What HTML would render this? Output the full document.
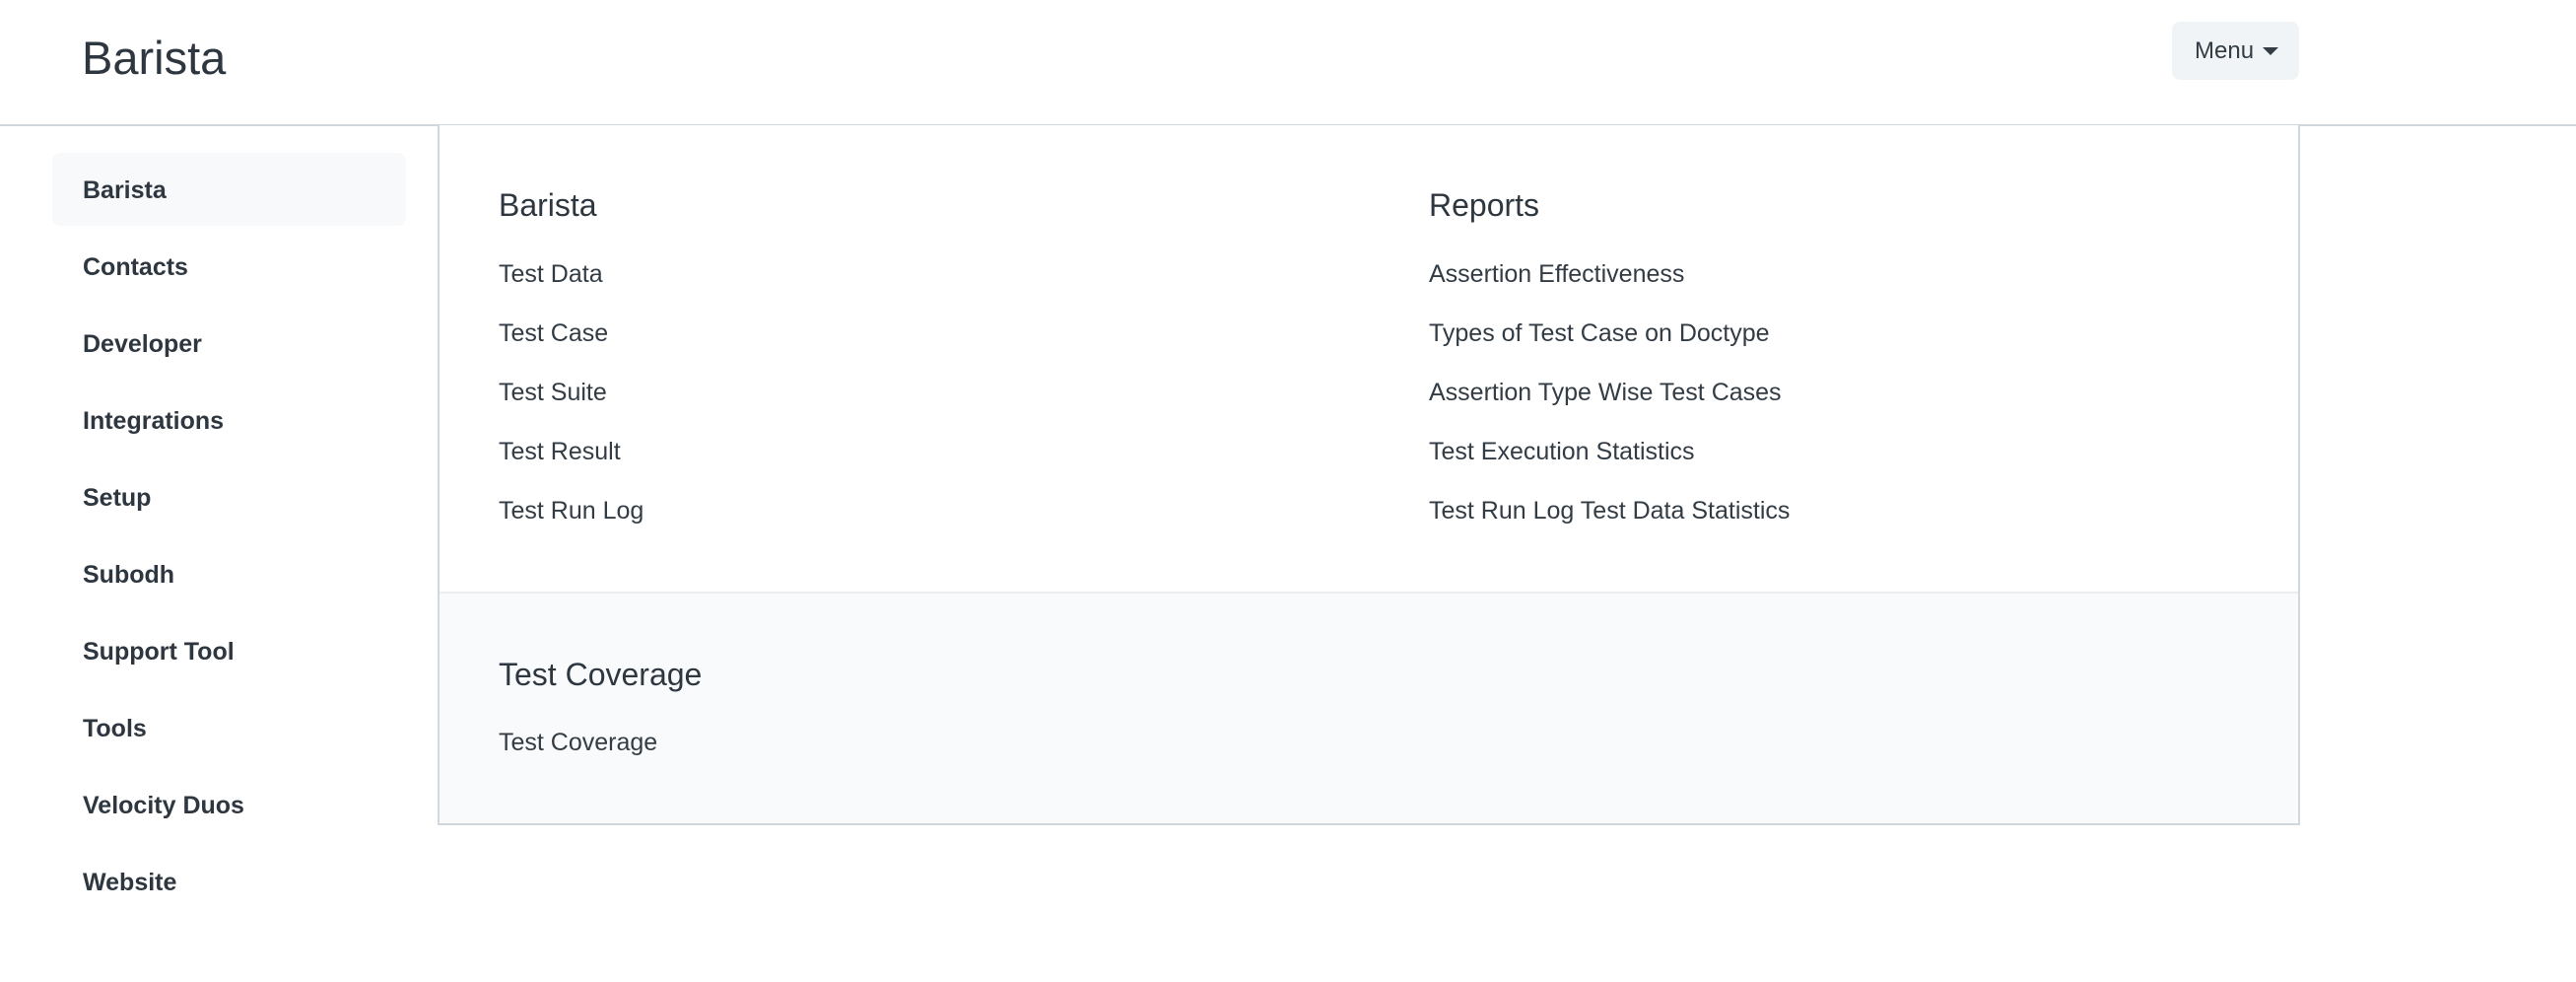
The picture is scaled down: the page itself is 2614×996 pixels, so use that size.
<!DOCTYPE html>
<html><head><meta charset="utf-8"><style>
*{margin:0;padding:0;box-sizing:border-box}
body{width:2614px;height:996px;background:#fff;font-family:"Liberation Sans",sans-serif;color:#333c44;position:relative;overflow:hidden}
.a{position:absolute;line-height:1;white-space:nowrap}
.s{font-size:25px;font-weight:bold;left:84px;color:#2e3740}
.h{font-size:32px;color:#2e3740}
.l{font-size:25px;color:#333c44}
</style></head><body>
<div class="a" style="left:83px;top:35px;font-size:47px;color:#2e3740">Barista</div>
<div style="position:absolute;left:2204px;top:22px;width:129px;height:59px;background:#f0f4f7;border-radius:8px"></div>
<div class="a" style="left:2227px;top:40px;font-size:24px;color:#333c44">Menu</div>
<svg style="position:absolute;left:2296px;top:48px" width="16" height="9"><path d="M0 0H16L8 8Z" fill="#333c44"/></svg>
<div style="position:absolute;left:0;top:126px;width:2614px;height:2px;background:#d1d8dd"></div>
<div style="position:absolute;left:53px;top:155px;width:359px;height:74px;background:#f7f9fb;border-radius:8px"></div>
<div class="a s" style="top:181px">Barista</div>
<div class="a s" style="top:259px">Contacts</div>
<div class="a s" style="top:337px">Developer</div>
<div class="a s" style="top:415px">Integrations</div>
<div class="a s" style="top:493px">Setup</div>
<div class="a s" style="top:571px">Subodh</div>
<div class="a s" style="top:649px">Support Tool</div>
<div class="a s" style="top:727px">Tools</div>
<div class="a s" style="top:805px">Velocity Duos</div>
<div class="a s" style="top:883px">Website</div>
<div style="position:absolute;left:444px;top:127px;width:1890px;height:710px;border:2px solid #d1d8dd;border-top:none;background:#fff"></div>
<div style="position:absolute;left:446px;top:600px;width:1886px;height:235px;background:#f8fafc;border-top:2px solid #ebeef0"></div>
<div class="a h" style="left:506px;top:192px">Barista</div>
<div class="a l" style="left:506px;top:266px">Test Data</div>
<div class="a l" style="left:506px;top:326px">Test Case</div>
<div class="a l" style="left:506px;top:386px">Test Suite</div>
<div class="a l" style="left:506px;top:446px">Test Result</div>
<div class="a l" style="left:506px;top:506px">Test Run Log</div>
<div class="a h" style="left:1450px;top:192px">Reports</div>
<div class="a l" style="left:1450px;top:266px">Assertion Effectiveness</div>
<div class="a l" style="left:1450px;top:326px">Types of Test Case on Doctype</div>
<div class="a l" style="left:1450px;top:386px">Assertion Type Wise Test Cases</div>
<div class="a l" style="left:1450px;top:446px">Test Execution Statistics</div>
<div class="a l" style="left:1450px;top:506px">Test Run Log Test Data Statistics</div>
<div class="a h" style="left:506px;top:668px">Test Coverage</div>
<div class="a l" style="left:506px;top:741px">Test Coverage</div>
</body></html>
